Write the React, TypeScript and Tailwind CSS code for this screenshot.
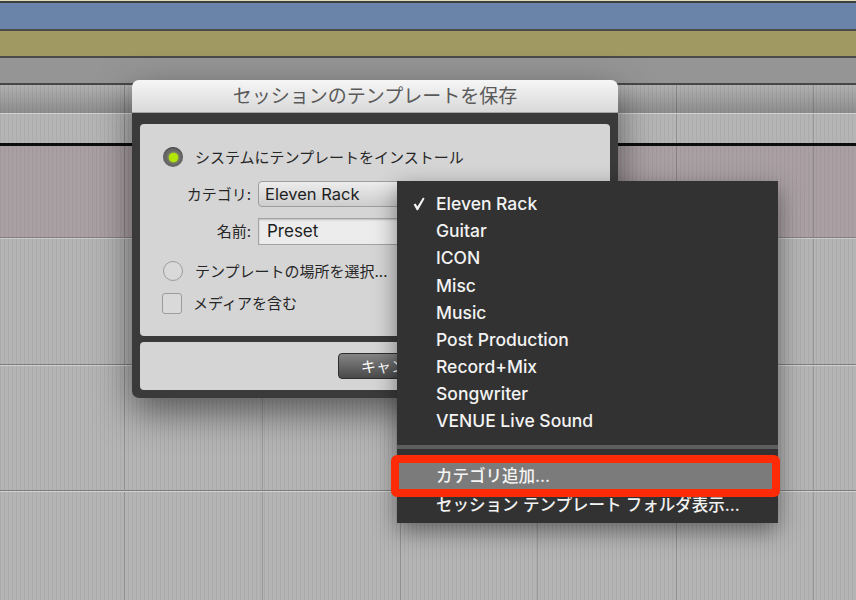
import React from "react";

const FONT = "font-['Inter','Noto_Sans_CJK_JP',sans-serif]";
const STRIPES =
  "[background-image:repeating-linear-gradient(90deg,rgba(0,0,0,0.05)_0px,rgba(0,0,0,0.05)_1px,transparent_1px,transparent_4px)]";
const STRIPES_GRAD =
  "[background-image:repeating-linear-gradient(90deg,rgba(0,0,0,0.05)_0px,rgba(0,0,0,0.05)_1px,transparent_1px,transparent_4px),linear-gradient(180deg,#b0b0b0,#8c8c8c)]";

const CELL_WIDTHS = ["w-[125px]", "w-[138px]", "w-[138px]", "w-[137px]", "w-[139px]", "w-[137px]"];

function Cells({ line }: { line: string }) {
  return (
    <>
      {CELL_WIDTHS.map((w, i) => (
        <div key={i} className={`${w} h-full shrink-0 border-r ${line}`} />
      ))}
      <div className="flex-1 h-full" />
    </>
  );
}

function GridRow({ h, bg }: { h: string; bg: string }) {
  return (
    <div className={`flex w-full ${h} ${bg}`}>
      <Cells line="border-black/15" />
    </div>
  );
}

const MENU_ITEMS = [
  "Eleven Rack",
  "Guitar",
  "ICON",
  "Misc",
  "Music",
  "Post Production",
  "Record+Mix",
  "Songwriter",
  "VENUE Live Sound",
];

export default function App() {
  return (
    <div className={`relative w-[856px] h-[600px] overflow-hidden bg-[#b3b3b3] ${FONT}`}>
      {/* background timeline rows */}
      <div className="flex flex-col w-full h-full">
        <div className="h-[1px] bg-[#dedbb8]" />
        <div className="h-[2px] bg-[#3e3e3e]" />
        <div className="h-[26px] bg-[#6a84a9]" />
        <div className="h-[2px] bg-[#4a4a48]" />
        <div className="h-[25px] bg-[#a09a62]" />
        <div className="h-[2px] bg-[#4a4a48]" />
        <div className="h-[25px] bg-[#959595]" />
        <div className="h-[2px] bg-[#474747]" />
        <GridRow h="h-[28px]" bg={`bg-[#a0a0a0] ${STRIPES_GRAD}`} />
        <div className="h-[1px] bg-[#d2d2d2]" />
        <GridRow h="h-[29px]" bg={`bg-[#b5b5b5] ${STRIPES}`} />
        <div className="h-[3px] bg-[#0c0c0c]" />
        <GridRow h="h-[91px]" bg={`bg-[#aaa0a4] ${STRIPES}`} />
        <div className="h-[1px] bg-[#858083]" />
        <div className="h-[1px] bg-[#cacaca]" />
        <GridRow h="h-[125px]" bg={`bg-[#b4b4b4] ${STRIPES}`} />
        <div className="h-[1px] bg-[#7c7c7c]" />
        <div className="h-[1px] bg-[#d0d0d0]" />
        <GridRow h="h-[124px]" bg={`bg-[#b4b4b4] ${STRIPES}`} />
        <div className="h-[1px] bg-[#7c7c7c]" />
        <div className="h-[1px] bg-[#d0d0d0]" />
        <GridRow h="flex-1" bg={`bg-[#b4b4b4] ${STRIPES}`} />
      </div>

      {/* dialog */}
      <div className="absolute left-[132px] top-[80px] w-[486px] rounded-[7px] shadow-[0_14px_36px_rgba(0,0,0,0.5)]">
        <div className="h-[33px] rounded-t-[7px] bg-linear-to-b from-[#f6f6f6] to-[#d9d9d9] border-b border-[#a5a5a5] flex items-center justify-center text-[19px] leading-none text-[#5a5a5a]">
          セッションのテンプレートを保存
        </div>
        <div className="bg-[#3a3a3a] rounded-b-[7px] px-[8px] pt-[11px] pb-[8px] flex flex-col gap-[6px]">
          <div className="h-[212px] rounded-[4px] bg-[#d5d5d5] pl-[23px] pt-[23px] flex flex-col text-[15px] text-[#262626]">
            <div className="h-[20px] flex items-center">
              <div className="w-[20px] h-[20px] rounded-full bg-[#676767] flex items-center justify-center shadow-[inset_0_1px_1px_rgba(0,0,0,0.4)]">
                <div className="w-[9px] h-[9px] rounded-full bg-[#b3e600] shadow-[0_0_3px_#c8ff30]" />
              </div>
              <span className="ml-[12px] leading-none">システムにテンプレートをインストール</span>
            </div>
            <div className="mt-[14px] h-[26px] flex items-center">
              <div className="w-[88px] text-right leading-none">カテゴリ:</div>
              <div className="ml-[7px] w-[330px] h-[26px] rounded-[4px] border border-[#9d9d9d] bg-linear-to-b from-[#ededed] to-[#cdcdcd] flex items-center pl-[6px] text-[16.5px] text-[#1e1e1e]">
                Eleven Rack
              </div>
            </div>
            <div className="mt-[11px] h-[27px] flex items-center">
              <div className="w-[88px] text-right leading-none">名前:</div>
              <div className="ml-[7px] w-[330px] h-[27px] border border-[#a3a3a3] bg-[#ececec] shadow-[inset_0_1px_2px_rgba(0,0,0,0.2)] flex items-center pl-[8px] text-[17px] text-[#1e1e1e]">
                Preset
              </div>
            </div>
            <div className="mt-[16px] h-[20px] flex items-center">
              <div className="w-[20px] h-[20px] rounded-full border-[1.5px] border-[#9c9c9c] bg-[#d9d9d9]" />
              <span className="ml-[12px] leading-none">テンプレートの場所を選択...</span>
            </div>
            <div className="mt-[12px] h-[21px] flex items-center -ml-[1px]">
              <div className="w-[20px] h-[21px] rounded-[3px] border-[1.5px] border-[#9c9c9c] bg-[#d9d9d9]" />
              <span className="ml-[11px] leading-none">メディアを含む</span>
            </div>
          </div>
          <div className="h-[48px] rounded-[4px] bg-[#d5d5d5] pl-[198px] pt-[11px]">
            <div className="w-[112px] h-[26px] rounded-[4px] border border-[#2e2e2e] bg-linear-to-b from-[#858585] to-[#4a4a4a] flex items-center pl-[22px] text-[15px] text-white leading-none">
              キャンセル
            </div>
          </div>
        </div>
      </div>

      {/* dropdown menu */}
      <div className="absolute left-[397px] top-[181px] w-[381px] h-[342px] bg-[#323232] shadow-[0_8px_22px_rgba(0,0,0,0.45)] pt-[9.5px] flex flex-col text-[#f3f3f3] font-medium">
        {MENU_ITEMS.map((item, i) => (
          <div key={item} className="h-[27.1px] flex items-center text-[17.5px] leading-none">
            <div className="w-[39px] pl-[16px] flex items-center">
              {i === 0 && (
                <svg width="12" height="14" viewBox="0 0 12 14">
                  <path d="M0.6 7.6 L2.6 6.4 L4.4 9.6 L10 0.6 L11.6 1.4 L5 13.2 L3.8 13.2 Z" fill="#f3f3f3" />
                </svg>
              )}
            </div>
            <span>{item}</span>
          </div>
        ))}
        <div className="mt-[10.5px] h-[4px] bg-[#5e5e5e]" />
        <div className="mt-[14px] h-[27px] bg-[#7b7b7b] flex items-center pl-[39px] text-[16.5px] leading-none text-[#f4f4f4]">
          カテゴリ追加...
        </div>
        <div className="mt-[2px] h-[27px] flex items-center pl-[39px] text-[16.5px] leading-none">
          セッション テンプレート フォルダ表示...
        </div>
      </div>

      {/* red highlight box */}
      <div className="absolute left-[391px] top-[455px] w-[389px] h-[42px] border-[8px] border-[#ff2b06] rounded-[6px]" />
    </div>
  );
}
